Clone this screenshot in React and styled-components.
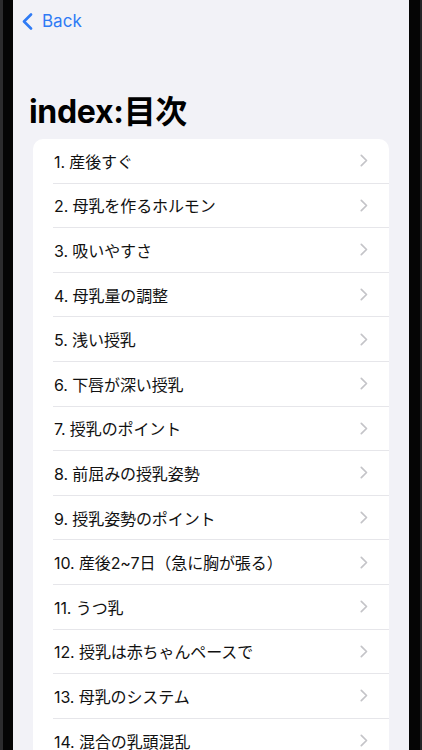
import React from 'react'
import styled, { createGlobalStyle } from 'styled-components'

const GlobalStyle = createGlobalStyle`
  html, body {
    margin: 0;
    padding: 0;
    background: #000;
  }
  body {
    font-family: Inter, "Noto Sans CJK JP", sans-serif;
    -webkit-font-smoothing: antialiased;
  }
`

const items = [
  '1. 産後すぐ',
  '2. 母乳を作るホルモン',
  '3. 吸いやすさ',
  '4. 母乳量の調整',
  '5. 浅い授乳',
  '6. 下唇が深い授乳',
  '7. 授乳のポイント',
  '8. 前屈みの授乳姿勢',
  '9. 授乳姿勢のポイント',
  '10. 産後2~7日（急に胸が張る）',
  '11. うつ乳',
  '12. 授乳は赤ちゃんペースで',
  '13. 母乳のシステム',
  '14. 混合の乳頭混乱',
  '15. 母乳の出を良くする',
]

const Device = styled.div`
  display: flex;
  width: 422px;
  height: 750px;
  overflow: hidden;
  background: #000;
`

const Bezel = styled.div`
  box-sizing: border-box;
  flex: 0 0 ${({ $w }) => $w}px;
  background: #050505;
  border-left: ${({ $side }) => ($side === 'left' ? '3px solid #2c2c2e' : 'none')};
  border-right: ${({ $side }) => ($side === 'right' ? '2px solid #242426' : 'none')};
`

const Screen = styled.div`
  flex: 1;
  min-width: 0;
  background: #f2f2f7;
  display: flex;
  flex-direction: column;
  overflow: hidden;
`

const NavBar = styled.div`
  height: 42px;
  flex-shrink: 0;
  display: flex;
  align-items: center;
  padding-left: 9px;
`

const BackButton = styled.button`
  display: flex;
  align-items: center;
  gap: 9px;
  border: none;
  background: none;
  padding: 0;
  color: #2f7bf5;
  font-family: Inter, "Liberation Sans", sans-serif;
  font-size: 17px;
  cursor: pointer;
`

const Title = styled.h1`
  margin: 50px 0 0 16px;
  height: 40px;
  flex-shrink: 0;
  line-height: 40px;
  font-size: 32px;
  font-weight: 700;
  color: #000;
  letter-spacing: -0.3px;
`

const Card = styled.ul`
  list-style: none;
  flex-shrink: 0;
  margin: 7px 20px 0 20px;
  padding: 0;
  background: #fff;
  border-radius: 10px;
  overflow: hidden;
`

const Row = styled.li`
  padding-left: 20px;
`

const RowInner = styled.div`
  height: 44.6px;
  box-sizing: border-box;
  display: flex;
  align-items: center;
  justify-content: space-between;
  padding: 0 21px 0 1px;
  border-bottom: ${({ $last }) => ($last ? 'none' : '1px solid #e6e6ea')};
`

const Label = styled.span`
  font-size: 16px;
  color: #111;
  letter-spacing: -0.1px;
`

const Chevron = () => (
  <svg width="8" height="13" viewBox="0 0 8 13" fill="none">
    <path d="M1.3 1.3 L6.5 6.5 L1.3 11.7" stroke="#c4c4c8" strokeWidth="1.7" strokeLinecap="round" strokeLinejoin="round" />
  </svg>
)

const BackChevron = () => (
  <svg width="11" height="17" viewBox="0 0 11 17" fill="none">
    <path d="M9 1.5 L2 8.5 L9 15.5" stroke="#2f7bf5" strokeWidth="2.6" strokeLinecap="round" strokeLinejoin="round" />
  </svg>
)

export default function App() {
  return (
    <>
      <GlobalStyle />
      <Device>
        <Bezel $w={13} $side="left" />
        <Screen>
          <NavBar>
            <BackButton>
              <BackChevron />
              Back
            </BackButton>
          </NavBar>
          <Title>index:目次</Title>
          <Card>
            {items.map((item, i) => (
              <Row key={i}>
                <RowInner $last={i === items.length - 1}>
                  <Label>{item}</Label>
                  <Chevron />
                </RowInner>
              </Row>
            ))}
          </Card>
        </Screen>
        <Bezel $w={13} $side="right" />
      </Device>
    </>
  )
}
